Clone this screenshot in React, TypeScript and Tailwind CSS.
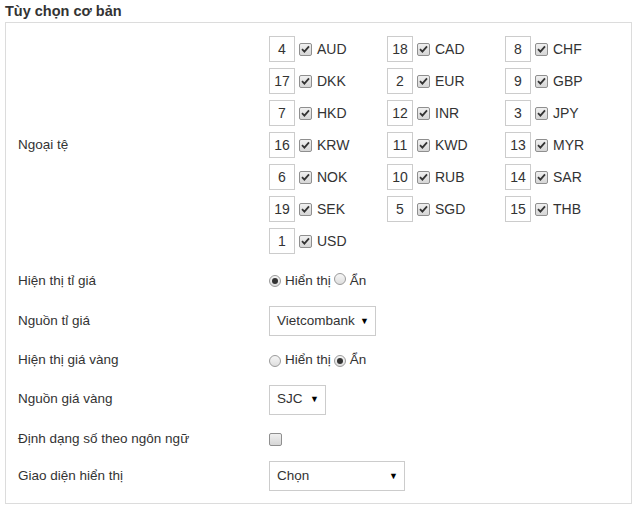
import type { ReactNode } from 'react'

const CURRENCIES: [number, string][] = [
  [4, 'AUD'], [18, 'CAD'], [8, 'CHF'],
  [17, 'DKK'], [2, 'EUR'], [9, 'GBP'],
  [7, 'HKD'], [12, 'INR'], [3, 'JPY'],
  [16, 'KRW'], [11, 'KWD'], [13, 'MYR'],
  [6, 'NOK'], [10, 'RUB'], [14, 'SAR'],
  [19, 'SEK'], [5, 'SGD'], [15, 'THB'],
  [1, 'USD'],
]

function Check({ checked = false }: { checked?: boolean }) {
  return (
    <span className="inline-flex h-[13px] w-[13px] shrink-0 items-center justify-center rounded-[2px] border border-[#8f8f8f] bg-gradient-to-b from-[#f0f0f0] to-[#d6d6d6]">
      {checked && (
        <svg width="9" height="8" viewBox="0 0 9 8">
          <path d="M1 4.2 L3.4 6.6 L8 1.4" fill="none" stroke="#333" strokeWidth="1.8" />
        </svg>
      )}
    </span>
  )
}

function Radio({ checked = false }: { checked?: boolean }) {
  return (
    <span className="inline-flex h-[12px] w-[12px] shrink-0 items-center justify-center rounded-full border border-[#9a9a9a] bg-gradient-to-b from-[#f6f6f6] to-[#dedede]">
      {checked && <span className="h-[6px] w-[6px] rounded-full bg-[#333]" />}
    </span>
  )
}

function Select({ value, width }: { value: string; width: string }) {
  return (
    <div className={`flex h-[30px] items-center justify-between border border-[#cccccc] bg-white pl-[7px] pr-[6px] ${width}`}>
      <span>{value}</span>
      <span className="text-[9px] leading-none text-black">▼</span>
    </div>
  )
}

function Row({ label, height, children }: { label: string; height: string; children: ReactNode }) {
  return (
    <div className={`flex items-center ${height}`}>
      <div className="w-[251px] shrink-0">{label}</div>
      <div className="flex items-center">{children}</div>
    </div>
  )
}

export default function App() {
  return (
    <div
      className="h-[509px] w-[640px] bg-white text-[13.5px] text-[#333]"
      style={{ fontFamily: '"Liberation Sans", Arial, sans-serif' }}
    >
      <div className="h-[22px] pl-[5px] pt-[3px] text-[14.5px] font-bold leading-[17px]">Tùy chọn cơ bản</div>
      <div className="ml-[5px] w-[627px] border border-[#dcdcdc] pl-[12px] pb-[11px] pt-[10px]">
        <div className="flex items-center">
          <div className="w-[251px] shrink-0">Ngoại tệ</div>
          <div className="grid grid-cols-[118px_118px_118px]">
            {CURRENCIES.map(([n, code]) => (
              <div key={code} className="flex h-[32px] items-center">
                <div className="flex h-[26px] w-[26px] items-center justify-center border border-[#cccccc] text-[14px]">{n}</div>
                <span className="ml-[4px] mt-[1px]">
                  <Check checked />
                </span>
                <span className="ml-[5px] text-[14px]">{code}</span>
              </div>
            ))}
          </div>
        </div>
        <div className="mt-[4px]">
          <Row label="Hiện thị tỉ giá" height="h-[40px]">
            <Radio checked />
            <span className="ml-[4px]">Hiển thị</span>
            <span className="ml-[3px]"><Radio /></span>
            <span className="ml-[4px]">Ẩn</span>
          </Row>
          <Row label="Nguồn tỉ giá" height="h-[40px]">
            <Select value="Vietcombank" width="w-[107px]" />
          </Row>
          <Row label="Hiện thị giá vàng" height="h-[39px]">
            <Radio />
            <span className="ml-[4px]">Hiển thị</span>
            <span className="ml-[3px]"><Radio checked /></span>
            <span className="ml-[4px]">Ẩn</span>
          </Row>
          <Row label="Nguồn giá vàng" height="h-[39px]">
            <Select value="SJC" width="w-[57px]" />
          </Row>
          <Row label="Định dạng số theo ngôn ngữ" height="h-[41px]">
            <Check />
          </Row>
          <Row label="Giao diện hiển thị" height="h-[32px]">
            <Select value="Chọn" width="w-[136px]" />
          </Row>
        </div>
      </div>
    </div>
  )
}
